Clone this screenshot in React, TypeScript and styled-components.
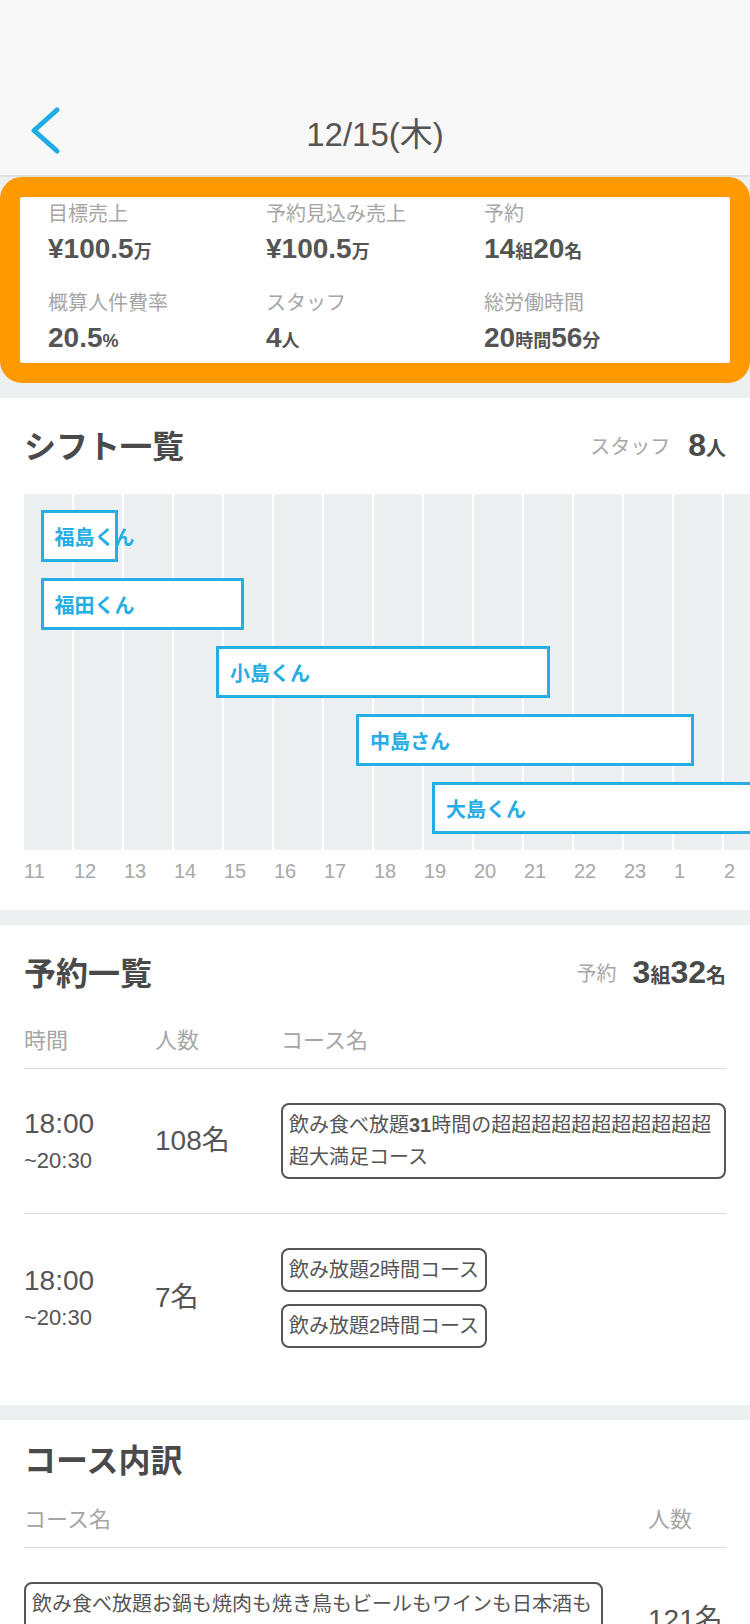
import React from "react";
import styled, { createGlobalStyle } from "styled-components";

const GlobalStyle = createGlobalStyle`
  html, body { margin: 0; padding: 0; }
  body {
    background: #ecf0f1;
    font-family: "Liberation Sans", "Noto Sans CJK JP", sans-serif;
    color: #555;
  }
  * { box-sizing: border-box; }
`;

const Page = styled.div`
  width: 750px;
  overflow: hidden;
`;

const Header = styled.header`
  height: 177px;
  background: #f8f8f8;
  border-bottom: 2px solid #e0e0e0;
  padding-top: 100px;
  display: grid;
  grid-template-columns: 100px 1fr 100px;
  align-items: start;
`;

const BackButton = styled.svg`
  margin: 5px 0 0 24px;
  width: 40px;
  height: 50px;
  display: block;
`;

const HeaderTitle = styled.h1`
  margin: 0;
  font-size: 33px;
  font-weight: 400;
  line-height: 70px;
  text-align: center;
  color: #555;
`;

const Summary = styled.section`
  border: 20px solid #ff9900;
  border-radius: 22px;
  background: #fff;
  padding: 4px 20px 4px 28px;
  display: grid;
  grid-template-columns: repeat(3, 218px);
  row-gap: 20px;
`;

const Stat = styled.div`
  display: flex;
  flex-direction: column;
`;

const StatLabel = styled.div`
  font-size: 20px;
  line-height: 26px;
  color: #a6a6a6;
  white-space: nowrap;
`;

const StatValue = styled.div`
  margin-top: 4px;
  font-size: 28px;
  line-height: 36px;
  font-weight: 700;
  color: #555;
  white-space: nowrap;
`;

const Unit = styled.span<{ $size?: number }>`
  font-size: ${(p) => p.$size ?? 18}px;
  font-weight: 700;
`;

const Section = styled.section<{ $top: number; $bottom: number }>`
  margin-top: 15px;
  background: #fff;
  padding: ${(p) => p.$top}px 24px ${(p) => p.$bottom}px;
`;

const SectionHead = styled.div`
  height: 40px;
  display: flex;
  align-items: center;
  justify-content: space-between;
`;

const SectionTitle = styled.h2`
  margin: 0;
  font-size: 32px;
  line-height: 40px;
  font-weight: 700;
  color: #4a4a4a;
`;

const Meta = styled.div`
  display: flex;
  align-items: center;
`;

const MetaLabel = styled.span<{ $gap: number }>`
  font-size: 20px;
  line-height: 40px;
  color: #a6a6a6;
  margin-right: ${(p) => p.$gap}px;
`;

const MetaValue = styled.span`
  font-size: 32px;
  line-height: 40px;
  font-weight: 700;
  color: #4a4a4a;
`;

const Chart = styled.div`
  margin-top: 27px;
  margin-right: -24px;
  overflow: hidden;
`;

const Track = styled.div`
  width: 750px;
  padding: 16px 0;
  display: flex;
  flex-direction: column;
  gap: 16px;
  background: repeating-linear-gradient(
    to right,
    #ecf0f1 0px,
    #ecf0f1 48px,
    #ffffff 48px,
    #ffffff 50px
  );
`;

const Bar = styled.div`
  height: 52px;
  border: 3px solid #25ade4;
  background: #fff;
  display: flex;
  align-items: center;
  padding-left: 11px;
  font-size: 20px;
  font-weight: 700;
  color: #25ade4;
  white-space: nowrap;
`;

const Hours = styled.div`
  margin-top: 7px;
  width: 750px;
  display: flex;
`;

const Hour = styled.span`
  flex: 0 0 50px;
  font-size: 20px;
  line-height: 28px;
  color: #a8a8a8;
`;

const ResHead = styled.div`
  margin-top: 32px;
  padding-bottom: 12px;
  border-bottom: 1px solid #dcdcdc;
  display: grid;
  grid-template-columns: 131px 126px 1fr;
`;

const CourseHead = styled(ResHead)`
  margin-top: 24px;
  grid-template-columns: 1fr 78px;
  column-gap: 45px;
`;

const ColLabel = styled.span`
  font-size: 22px;
  line-height: 30px;
  color: #a6a6a6;
`;

const ResRow = styled.div<{ $last?: boolean }>`
  padding: 34px 0;
  border-bottom: ${(p) => (p.$last ? "none" : "1px solid #dcdcdc")};
  display: grid;
  grid-template-columns: 131px 126px 1fr;
  align-items: center;
`;

const CourseRow = styled.div`
  padding: 34px 0;
  display: grid;
  grid-template-columns: 1fr 78px;
  column-gap: 45px;
  align-items: center;
`;

const TimeBlock = styled.div`
  display: flex;
  flex-direction: column;
  gap: 4px;
`;

const TimeStart = styled.span`
  font-size: 28px;
  line-height: 36px;
  color: #555;
`;

const TimeEnd = styled.span`
  font-size: 22px;
  line-height: 30px;
  color: #555;
`;

const Count = styled.span`
  font-size: 28px;
  line-height: 36px;
  color: #555;
  white-space: nowrap;
`;

const Tags = styled.div`
  display: flex;
  flex-direction: column;
  align-items: flex-start;
  gap: 12px;
`;

const Tag = styled.div`
  border: 2px solid #555;
  border-radius: 8px;
  padding: 4px 6px;
  font-size: 20px;
  line-height: 32px;
  color: #555;
`;

const Strong = styled.b`
  font-weight: 700;
`;

type Shift = { name: string; start: number; end: number };

const HOUR_PX = 50;
const FIRST_HOUR = 11;

const shifts: Shift[] = [
  { name: "福島くん", start: 11.33, end: 12.88 },
  { name: "福田くん", start: 11.33, end: 15.39 },
  { name: "小島くん", start: 14.84, end: 21.52 },
  { name: "中島さん", start: 17.64, end: 24.4 },
  { name: "大島くん", start: 19.16, end: 27.5 },
];

const hours = [11, 12, 13, 14, 15, 16, 17, 18, 19, 20, 21, 22, 23, 1, 2];

type Reservation = { start: string; end: string; count: string; courses: React.ReactNode[] };

const reservations: Reservation[] = [
  {
    start: "18:00",
    end: "~20:30",
    count: "108名",
    courses: [
      <>
        飲み食べ放題<Strong>31</Strong>時間の超超超超超超超超超超超超大満足コース
      </>,
    ],
  },
  {
    start: "18:00",
    end: "~20:30",
    count: "7名",
    courses: ["飲み放題2時間コース", "飲み放題2時間コース"],
  },
];

export default function App() {
  return (
    <Page>
      <GlobalStyle />
      <Header>
        <BackButton viewBox="0 0 40 50">
          <polyline
            points="33,5 10,25.5 33,46"
            fill="none"
            stroke="#1fabe4"
            strokeWidth="5"
            strokeLinecap="round"
            strokeLinejoin="round"
          />
        </BackButton>
        <HeaderTitle>12/15(木)</HeaderTitle>
        <span />
      </Header>

      <Summary>
        <Stat>
          <StatLabel>目標売上</StatLabel>
          <StatValue>
            ¥100.5<Unit>万</Unit>
          </StatValue>
        </Stat>
        <Stat>
          <StatLabel>予約見込み売上</StatLabel>
          <StatValue>
            ¥100.5<Unit>万</Unit>
          </StatValue>
        </Stat>
        <Stat>
          <StatLabel>予約</StatLabel>
          <StatValue>
            14<Unit>組</Unit>20<Unit>名</Unit>
          </StatValue>
        </Stat>
        <Stat>
          <StatLabel>概算人件費率</StatLabel>
          <StatValue>
            20.5<Unit>%</Unit>
          </StatValue>
        </Stat>
        <Stat>
          <StatLabel>スタッフ</StatLabel>
          <StatValue>
            4<Unit>人</Unit>
          </StatValue>
        </Stat>
        <Stat>
          <StatLabel>総労働時間</StatLabel>
          <StatValue>
            20<Unit>時間</Unit>56<Unit>分</Unit>
          </StatValue>
        </Stat>
      </Summary>

      <Section $top={29} $bottom={25}>
        <SectionHead>
          <SectionTitle>シフト一覧</SectionTitle>
          <Meta>
            <MetaLabel $gap={18}>スタッフ</MetaLabel>
            <MetaValue>
              8<Unit $size={20}>人</Unit>
            </MetaValue>
          </Meta>
        </SectionHead>
        <Chart>
          <Track>
            {shifts.map((s) => (
              <Bar
                key={s.name}
                style={{
                  marginLeft: (s.start - FIRST_HOUR) * HOUR_PX,
                  width: (s.end - s.start) * HOUR_PX,
                }}
              >
                {s.name}
              </Bar>
            ))}
          </Track>
          <Hours>
            {hours.map((h) => (
              <Hour key={h}>{h}</Hour>
            ))}
          </Hours>
        </Chart>
      </Section>

      <Section $top={29} $bottom={23}>
        <SectionHead>
          <SectionTitle>予約一覧</SectionTitle>
          <Meta>
            <MetaLabel $gap={16}>予約</MetaLabel>
            <MetaValue>
              3<Unit $size={20}>組</Unit>32<Unit $size={20}>名</Unit>
            </MetaValue>
          </Meta>
        </SectionHead>
        <ResHead>
          <ColLabel>時間</ColLabel>
          <ColLabel>人数</ColLabel>
          <ColLabel>コース名</ColLabel>
        </ResHead>
        {reservations.map((r, i) => (
          <ResRow key={i} $last={i === reservations.length - 1}>
            <TimeBlock>
              <TimeStart>{r.start}</TimeStart>
              <TimeEnd>{r.end}</TimeEnd>
            </TimeBlock>
            <Count>{r.count}</Count>
            <Tags>
              {r.courses.map((c, j) => (
                <Tag key={j}>{c}</Tag>
              ))}
            </Tags>
          </ResRow>
        ))}
      </Section>

      <Section $top={21} $bottom={24}>
        <SectionHead>
          <SectionTitle>コース内訳</SectionTitle>
        </SectionHead>
        <CourseHead>
          <ColLabel>コース名</ColLabel>
          <ColLabel>人数</ColLabel>
        </CourseHead>
        <CourseRow>
          <Tag>飲み食べ放題お鍋も焼肉も焼き鳥もビールもワインも日本酒も飲み放題の大満足コース</Tag>
          <Count>121名</Count>
        </CourseRow>
      </Section>
    </Page>
  );
}
